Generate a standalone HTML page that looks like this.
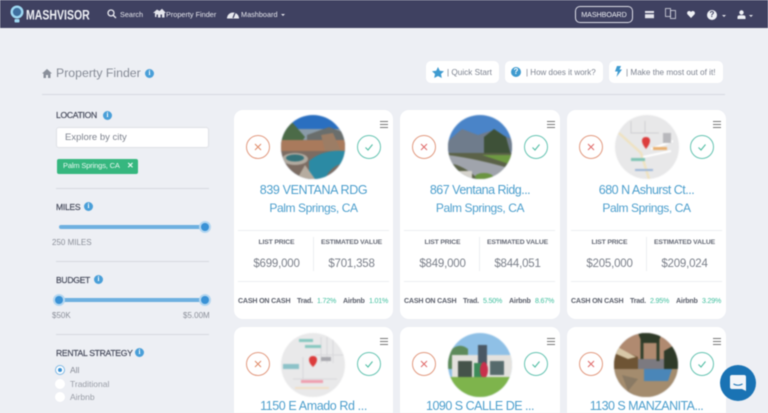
<!DOCTYPE html>
<html><head><meta charset="utf-8"><style>
*{box-sizing:border-box}
html{margin:0;padding:0;width:768px;height:413px;overflow:hidden}
body{margin:0;padding:0;width:768px;height:413px;overflow:hidden;background:#edeff4;font-family:"Liberation Sans",sans-serif;position:relative;color:#6c7280}
.a{position:absolute;white-space:nowrap}
#wrap{position:absolute;left:0;top:0;width:768px;height:413px;overflow:hidden;filter:blur(.4px)}
.nav{left:0;top:0;width:768px;height:28px;background:#3f4161}
.nt{color:#e4e5ec;font-size:7.3px;top:10px}
.pill{background:#fff;border-radius:5px;height:22px;top:61px;font-size:8.2px;color:#7d8390;line-height:23px}
.i{display:inline-block;width:9px;height:9px;border-radius:50%;background:#4a9fd8;color:#fff;font:bold 7px/9px "Liberation Serif",serif;text-align:center}
.lab{font-size:8.6px;color:#474b5c;left:56px;letter-spacing:-.3px;-webkit-text-stroke:.2px #474b5c}
.hr{height:1px;background:#d6d9e0;left:56px;width:153px}
.card{position:absolute;width:159px;height:209px;background:#fff;border-radius:9px}
.card.r2{height:86px;border-radius:9px 9px 0 0}
.card svg.ph{position:absolute;left:47px;top:5px;width:64px;height:64px;filter:blur(.6px)}
.x,.c{position:absolute;top:25px;width:24px;height:24px;border-radius:50%;background:#fff}
.x{left:12px;border:1px solid #e29a80}.c{left:123px;border:1px solid #66c4b2}
.x svg,.c svg{position:absolute;left:6px;top:6px;width:10px;height:10px}
.m{position:absolute;left:146px;top:11px;width:8px;height:7px;border-top:1px solid #777;border-bottom:1px solid #777}
.m:after{content:"";position:absolute;left:0;right:0;top:2px;height:1px;background:#777}
.t{position:absolute;left:0;width:159px;text-align:center;color:#4d9fcd;font-size:12.5px;letter-spacing:-.37px;white-space:nowrap;height:14px;line-height:14px}
.t.s{font-size:12px;letter-spacing:-.4px}
.d{position:absolute;left:4px;width:151px;height:1px;background:#eceef1}
.v{position:absolute;left:79px;top:127px;width:1px;height:34px;background:#eceef1}
.l1,.l2,.p1,.p2{position:absolute;text-align:center;white-space:nowrap}
.l1,.l2{top:129px;font-size:6.8px;font-weight:bold;color:#666a76;letter-spacing:-.15px}
.p1,.p2{top:148px;font-size:11.5px;letter-spacing:-.2px;color:#7c818b}
.l1,.p1{left:5px;width:75px}.l2,.p2{left:80px;width:75px}
.cc{position:absolute;top:187px;left:4px;width:152px;height:9px;font-size:7.1px;font-weight:bold;color:#5c606c;letter-spacing:-.2px;white-space:nowrap}
.cc span{position:absolute;top:0}.cc b{font-weight:normal;color:#3fbf9e}
</style></head><body>
<svg width="0" height="0" style="position:absolute"><defs><clipPath id="cp"><circle cx="32" cy="32" r="32"/></clipPath></defs></svg>
<div id="wrap">
<div class="a nav"></div>
<svg class="a" style="left:10px;top:5px" width="14" height="19" viewBox="0 0 14 19"><circle cx="7" cy="7" r="5.3" fill="#3f6f9f" stroke="#9ed8f2" stroke-width="2.4"/><rect x="4.5" y="14" width="5" height="3.5" rx="1" fill="#9ed8f2"/></svg>
<div class="a" style="left:26px;top:7px;font-size:13px;font-weight:bold;color:#eef0f5;transform-origin:0 50%;transform:scale(.81,1.08)">MASHVISOR</div>
<svg class="a" style="left:107px;top:9px" width="10" height="10" viewBox="0 0 10 10"><circle cx="4" cy="4" r="3" fill="none" stroke="#e8e9ef" stroke-width="1.3"/><path d="M6.2 6.2L9 9" stroke="#e8e9ef" stroke-width="1.4"/></svg>
<div class="a nt" style="left:120px">Search</div>
<svg class="a" style="left:153px;top:8px" width="13" height="10" viewBox="0 0 13 10"><path d="M0 5L4 1.5 6.5 3 9 .8 13 5 11.5 5V9.5H9V6.5H7.5V9.5H5V6.5H3.5V9H2V5Z" fill="#e4e5ec"/></svg>
<div class="a nt" style="left:166px">Property Finder</div>
<svg class="a" style="left:227px;top:9px" width="12" height="10" viewBox="0 0 12 10"><path d="M0 9.5A6 6 0 1 1 12 9.5Z" fill="#e8e9ef"/><path d="M6 9L8 4" stroke="#3f4161" stroke-width="1.2"/></svg>
<div class="a nt" style="left:241px">Mashboard</div>
<div class="a" style="left:281px;top:14px;border:2.5px solid transparent;border-top-color:#e4e5ec"></div>
<div class="a" style="left:575px;top:6px;width:58px;height:17px;border:1px solid #dcdde6;border-radius:5px;color:#eceef3;font-size:7.2px;line-height:15px;text-align:center;letter-spacing:-.1px">MASHBOARD</div>
<svg class="a" style="left:645px;top:10px" width="10" height="9" viewBox="0 0 10 9"><rect y="1" width="9" height="2" fill="#e4e5ec"/><rect y="4.2" width="9" height="4" fill="#e4e5ec"/></svg>
<svg class="a" style="left:665px;top:8px" width="11" height="11" viewBox="0 0 11 11"><rect x=".5" y=".5" width="5" height="8" fill="none" stroke="#d5d6e0" stroke-width=".8"/><rect x="5.5" y="2.5" width="5" height="8" fill="none" stroke="#d5d6e0" stroke-width=".8"/></svg>
<svg class="a" style="left:687px;top:11px" width="8" height="7" viewBox="0 0 8 7"><path d="M4 7L.4 3.2A2 2 0 0 1 4 1 2 2 0 0 1 7.6 3.2Z" fill="#eef0f5"/></svg>
<div class="a" style="left:707px;top:10px;width:10px;height:10px;border-radius:50%;background:#eef0f5;color:#3f4161;font-size:8px;font-weight:bold;line-height:10px;text-align:center">?</div>
<div class="a" style="left:722px;top:15px;border:2.5px solid transparent;border-top-color:#e4e5ec"></div>
<svg class="a" style="left:737px;top:10px" width="9" height="9" viewBox="0 0 9 9"><circle cx="4.5" cy="2.5" r="2.2" fill="#eef0f5"/><path d="M.5 9V7Q.5 5.2 3 5.2H6Q8.5 5.2 8.5 7V9Z" fill="#eef0f5"/></svg>
<div class="a" style="left:749px;top:15px;border:2.5px solid transparent;border-top-color:#e4e5ec"></div>

<svg class="a" style="left:42px;top:69px" width="10" height="9" viewBox="0 0 10 9"><path d="M5 0L10 4.5H8.5V9H6V6H4V9H1.5V4.5H0Z" fill="#8a8f9a"/></svg>
<div class="a" style="left:56px;top:66px;font-size:12.3px;color:#868b96">Property Finder</div>
<div class="a i" style="left:145px;top:69px">i</div>
<div class="a" style="left:42px;top:94px;width:683px;height:1px;background:#d6d9e2"></div>

<div class="a pill" style="left:426px;width:73px;padding-left:21px">| Quick Start</div>
<svg class="a" style="left:432px;top:67px" width="12" height="11" viewBox="0 0 12 11"><path d="M6 0L7.8 3.7 12 4.2 9 7 9.8 11 6 9 2.2 11 3 7 0 4.2 4.2 3.7Z" fill="#3f9bd0"/></svg>
<div class="pill a" style="left:505px;width:98px;padding-left:21px;font-size:8px">| How does it work?</div>
<div class="a" style="left:511px;top:67px;width:10px;height:10px;border-radius:50%;background:#3f9bd0;color:#fff;font-size:8px;font-weight:bold;line-height:10px;text-align:center">?</div>
<div class="pill a" style="left:609px;width:114px;padding-left:17px;font-size:8.2px">| Make the most out of it!</div>
<svg class="a" style="left:615px;top:66px" width="7" height="11" viewBox="0 0 7 11"><path d="M2 0H6L4.5 3.5H7L1.5 11 2.8 5.5H0Z" fill="#3f9bd0"/></svg>

<div class="a lab" style="top:110px">LOCATION</div><div class="a i" style="left:103px;top:111px">i</div>
<div class="a" style="left:56px;top:127px;width:153px;height:21px;background:#fff;border:1px solid #dfe1e6;border-radius:3px;padding-left:8px;font-size:9.5px;line-height:20px;color:#7e838e">Explore by city</div>
<div class="a" style="left:57px;top:159px;width:81px;height:15px;background:#36b77f;border-radius:2px;color:#e8f8f1;font-size:7.5px;line-height:14px;padding-left:6px;letter-spacing:-.15px">Palm Springs, CA<b style="position:absolute;left:70px;top:0;font-size:8px">✕</b></div>
<div class="a hr" style="top:188px"></div>
<div class="a lab" style="top:202px">MILES</div><div class="a i" style="left:84px;top:202px">i</div>
<div class="a" style="left:59px;top:225px;width:146px;height:4px;background:#6eb0e0;border-radius:2px"></div>
<div class="a" style="left:199px;top:221px;width:12px;height:12px;border-radius:50%;background:#b3d6f0"></div><div class="a" style="left:201px;top:223px;width:8px;height:8px;border-radius:50%;background:#3a92d6"></div>
<div class="a" style="left:52px;top:238px;font-size:8px;color:#8b8f99">250 MILES</div>
<div class="a hr" style="top:261px"></div>
<div class="a lab" style="top:275px">BUDGET</div><div class="a i" style="left:94px;top:275px">i</div>
<div class="a" style="left:59px;top:298px;width:146px;height:4px;background:#6eb0e0;border-radius:2px"></div>
<div class="a" style="left:53px;top:294px;width:12px;height:12px;border-radius:50%;background:#b3d6f0"></div><div class="a" style="left:55px;top:296px;width:8px;height:8px;border-radius:50%;background:#3a92d6"></div>
<div class="a" style="left:199px;top:294px;width:12px;height:12px;border-radius:50%;background:#b3d6f0"></div><div class="a" style="left:201px;top:296px;width:8px;height:8px;border-radius:50%;background:#3a92d6"></div>
<div class="a" style="left:52px;top:311px;font-size:8px;color:#8b8f99">$50K</div>
<div class="a" style="left:183px;top:311px;font-size:8px;color:#8b8f99">$5.00M</div>
<div class="a hr" style="top:334px"></div>
<div class="a lab" style="top:348px">RENTAL STRATEGY</div><div class="a i" style="left:135px;top:348px">i</div>
<div class="a" style="left:55px;top:365px;width:10px;height:10px;border-radius:50%;background:#fff;border:1px solid #7fb8e4"></div><div class="a" style="left:58px;top:368px;width:4px;height:4px;border-radius:50%;background:#3a92d6"></div>
<div class="a" style="left:55px;top:379px;width:10px;height:10px;border-radius:50%;background:#fff"></div>
<div class="a" style="left:55px;top:392px;width:10px;height:10px;border-radius:50%;background:#fff"></div>
<div class="a" style="left:70px;top:365px;font-size:8.5px;color:#888c96">All</div>
<div class="a" style="left:70px;top:379px;font-size:8.5px;color:#9a9ea7">Traditional</div>
<div class="a" style="left:70px;top:392px;font-size:8.5px;color:#9a9ea7">Airbnb</div>

<!-- card 1 -->
<div class="card" style="left:234px;top:110px">
<svg class="ph" viewBox="0 0 64 64"><g clip-path="url(#cp)"><rect width="64" height="64" fill="#2a6fc0"/><rect y="14" width="64" height="12" fill="#8a9ba8"/><path d="M0 8L10 6 24 22 20 28H0Z" fill="#4c6b48"/><path d="M26 20L48 12 64 18V30H26Z" fill="#6a6e6c"/><rect y="25" width="64" height="13" fill="#a97a5c"/><path d="M40 20L52 18 60 36H44Z" fill="#9c7d65"/><rect y="36" width="64" height="28" fill="#7c6c62"/><path d="M28 46Q42 34 64 36V48Q50 50 44 64H28Z" fill="#2b8aa4"/><ellipse cx="14" cy="44" rx="13" ry="6" fill="#b1aaa0"/><ellipse cx="14" cy="43" rx="9" ry="3.5" fill="#36737a"/><path d="M24 50L34 64H16Z" fill="#b6aca0"/></g></svg>
<div class="x"><svg viewBox="0 0 10 10"><path d="M2 2L8 8M8 2L2 8" stroke="#e0906f" stroke-width="1.1"/></svg></div><div class="c"><svg viewBox="0 0 10 10"><path d="M1.5 5.5L4 8 8.5 2.5" stroke="#54bfa6" stroke-width="1.1" fill="none"/></svg></div><div class="m"></div>
<div class="t" style="top:73px">839 VENTANA RDG</div><div class="t s" style="top:91px">Palm Springs, CA</div>
<div class="d" style="top:120px"></div><div class="v"></div><div class="d" style="top:171px"></div>
<div class="l1">LIST PRICE</div><div class="l2">ESTIMATED VALUE</div><div class="p1">$699,000</div><div class="p2">$701,358</div>
<div class="cc"><span style="left:0">CASH ON CASH</span><span style="left:59px">Trad.</span><span style="left:79px"><b>1.72%</b></span><span style="left:105px">Airbnb</span><span style="left:131px"><b>1.01%</b></span></div>
</div>
<!-- card 2 -->
<div class="card" style="left:400px;top:110px;width:160px">
<svg class="ph" style="left:48px" viewBox="0 0 64 64"><g clip-path="url(#cp)"><rect width="64" height="64" fill="#4a84c8"/><path d="M0 26L14 14 30 20 42 16 64 24V44H0Z" fill="#6f7c8c"/><path d="M36 38V22L46 14 58 22 64 44Z" fill="#3e5138"/><rect y="38" width="64" height="26" fill="#5b6248"/><path d="M0 40Q30 44 64 54V64H30Q16 50 0 48Z" fill="#a0a4ac"/><path d="M34 40H64V50Z" fill="#6e9a42"/><ellipse cx="36" cy="62" rx="9" ry="4" fill="#6a9440"/><rect y="56" width="24" height="8" fill="#d6d3cc"/></g></svg>
<div class="x"><svg viewBox="0 0 10 10"><path d="M2 2L8 8M8 2L2 8" stroke="#e0706f" stroke-width="1.1"/></svg></div><div class="c" style="left:124px"><svg viewBox="0 0 10 10"><path d="M1.5 5.5L4 8 8.5 2.5" stroke="#54bfa6" stroke-width="1.1" fill="none"/></svg></div><div class="m" style="left:147px"></div>
<div class="t" style="top:73px;width:160px;letter-spacing:-.5px">867 Ventana Ridg...</div><div class="t s" style="top:91px;width:160px">Palm Springs, CA</div>
<div class="d" style="top:120px"></div><div class="v"></div><div class="d" style="top:171px"></div>
<div class="l1">LIST PRICE</div><div class="l2">ESTIMATED VALUE</div><div class="p1">$849,000</div><div class="p2">$844,051</div>
<div class="cc"><span style="left:0">CASH ON CASH</span><span style="left:59px">Trad.</span><span style="left:79px"><b>5.50%</b></span><span style="left:105px">Airbnb</span><span style="left:131px"><b>8.67%</b></span></div>
</div>
<!-- card 3 -->
<div class="card" style="left:567px;top:110px">
<svg class="ph" style="left:47.5px" viewBox="0 0 64 64"><g clip-path="url(#cp)"><rect width="64" height="64" fill="#e8e8e9"/><path d="M4 18L26 38 34 64" stroke="#efe3c2" stroke-width="2.5" fill="none"/><path d="M36 34L58 26M28 42L56 36" stroke="#fff" stroke-width="2"/><path d="M16 6V18H44M30 6V18" stroke="#d0d0d2" fill="none"/><rect x="38" y="32" width="14" height="3" fill="#e9b070"/><rect x="16" y="43" width="14" height="3" fill="#7fc4b5"/><rect x="20" y="54" width="18" height="2" fill="#9cb6d8"/><rect x="48" y="18" width="8" height="10" fill="#b8b8bc"/><path d="M31 22Q27 22 27 26 27 29 31 34 35 29 35 26 35 22 31 22Z" fill="#dc3c3c"/></g></svg>
<div class="x"><svg viewBox="0 0 10 10"><path d="M2 2L8 8M8 2L2 8" stroke="#e0706f" stroke-width="1.1"/></svg></div><div class="c"><svg viewBox="0 0 10 10"><path d="M1.5 5.5L4 8 8.5 2.5" stroke="#54bfa6" stroke-width="1.1" fill="none"/></svg></div><div class="m"></div>
<div class="t" style="top:73px;letter-spacing:-.5px">680 N Ashurst Ct...</div><div class="t s" style="top:91px">Palm Springs, CA</div>
<div class="d" style="top:120px"></div><div class="v"></div><div class="d" style="top:171px"></div>
<div class="l1">LIST PRICE</div><div class="l2">ESTIMATED VALUE</div><div class="p1">$205,000</div><div class="p2">$209,024</div>
<div class="cc"><span style="left:0">CASH ON CASH</span><span style="left:59px">Trad.</span><span style="left:79px"><b>2.95%</b></span><span style="left:105px">Airbnb</span><span style="left:131px"><b>3.29%</b></span></div>
</div>
<!-- row 2 -->
<div class="card r2" style="left:234px;top:327px">
<svg class="ph" style="top:6px" viewBox="0 0 64 64"><g clip-path="url(#cp)"><rect width="64" height="64" fill="#e9e9ea"/><path d="M40 4V30M46 4V30M52 4V30M22 24V50M12 46H56M34 22H64" stroke="#d8d8da" fill="none"/><rect x="18" y="6" width="14" height="3" fill="#88c8c0"/><rect x="24" y="12" width="16" height="3" fill="#88c8c0"/><rect x="2" y="31" width="16" height="5" fill="#8cc2c8"/><rect x="40" y="24" width="10" height="4" fill="#a9a9ae"/><rect x="20" y="47" width="22" height="3" fill="#efa0b0"/><rect x="14" y="54" width="34" height="2" fill="#f1dfc8"/><path d="M32 23Q28 23 28 27 28 30 32 34 36 30 36 27 36 23 32 23Z" fill="#dc3c3c"/></g></svg>
<div class="x"><svg viewBox="0 0 10 10"><path d="M2 2L8 8M8 2L2 8" stroke="#e0906f" stroke-width="1.1"/></svg></div><div class="c"><svg viewBox="0 0 10 10"><path d="M1.5 5.5L4 8 8.5 2.5" stroke="#54bfa6" stroke-width="1.1" fill="none"/></svg></div><div class="m"></div>
<div class="t" style="top:72px;letter-spacing:-.4px">1150 E Amado Rd ...</div>
</div>
<div class="card r2" style="left:400px;top:327px;width:160px">
<svg class="ph" style="left:48px;top:6px" viewBox="0 0 64 64"><g clip-path="url(#cp)"><rect width="64" height="64" fill="#8fc0e6"/><path d="M0 20Q10 8 20 16V36H0Z" fill="#5d8a5a"/><rect x="4" y="22" width="60" height="24" fill="#e4e2de"/><rect x="30" y="12" width="9" height="28" fill="#4a5864"/><rect x="10" y="28" width="14" height="16" fill="#45534a"/><rect x="26" y="30" width="8" height="14" fill="#3c8a58"/><ellipse cx="36" cy="37" rx="4" ry="8" fill="#c8304c"/><rect x="42" y="28" width="14" height="14" fill="#566a6c"/><rect y="44" width="64" height="20" fill="#7eb44c"/></g></svg>
<div class="x"><svg viewBox="0 0 10 10"><path d="M2 2L8 8M8 2L2 8" stroke="#e0706f" stroke-width="1.1"/></svg></div><div class="c" style="left:124px"><svg viewBox="0 0 10 10"><path d="M1.5 5.5L4 8 8.5 2.5" stroke="#54bfa6" stroke-width="1.1" fill="none"/></svg></div><div class="m" style="left:147px"></div>
<div class="t" style="top:72px;width:160px;letter-spacing:-.5px">1090 S CALLE DE ...</div>
</div>
<div class="card r2" style="left:567px;top:327px">
<svg class="ph" style="top:6px" viewBox="0 0 64 64"><g clip-path="url(#cp)"><rect width="64" height="64" fill="#7c7a80"/><path d="M0 0H64V26H0Z" fill="#b08a70"/><path d="M28 0V26M44 0V28" stroke="#33402c" stroke-width="3"/><path d="M24 0H48L44 10H28ZM50 18L64 10V36H50Z" fill="#2e3a28"/><path d="M0 14L24 24V36H0Z" fill="#6e5434"/><path d="M0 12L22 24 14 26 0 20Z" fill="#d8c8a8"/><rect y="36" width="64" height="28" fill="#a48c6e"/><path d="M30 36H58L54 48H30Z" fill="#4a86b8"/><path d="M8 42L24 46 14 58Z" fill="#8a7a64"/><path d="M0 50L24 64H0Z" fill="#5c4830"/></g></svg>
<div class="x"><svg viewBox="0 0 10 10"><path d="M2 2L8 8M8 2L2 8" stroke="#e0706f" stroke-width="1.1"/></svg></div><div class="c"><svg viewBox="0 0 10 10"><path d="M1.5 5.5L4 8 8.5 2.5" stroke="#54bfa6" stroke-width="1.1" fill="none"/></svg></div><div class="m"></div>
<div class="t" style="top:72px;letter-spacing:-.55px">1130 S MANZANITA...</div>
</div>
<div class="a" style="left:720px;top:365px;width:36px;height:36px;border-radius:50%;background:#1a73b4"></div>
<svg class="a" style="left:729px;top:374px" width="18" height="19" viewBox="0 0 18 19"><path d="M3 1H15Q17 1 17 3V17L13 15H3Q1 15 1 13V3Q1 1 3 1Z" fill="#f3f6f9"/><path d="M4.5 10Q9 12.5 13.5 10" stroke="#1a73b4" stroke-width="1.1" fill="none"/></svg>
</div>
</body></html>
